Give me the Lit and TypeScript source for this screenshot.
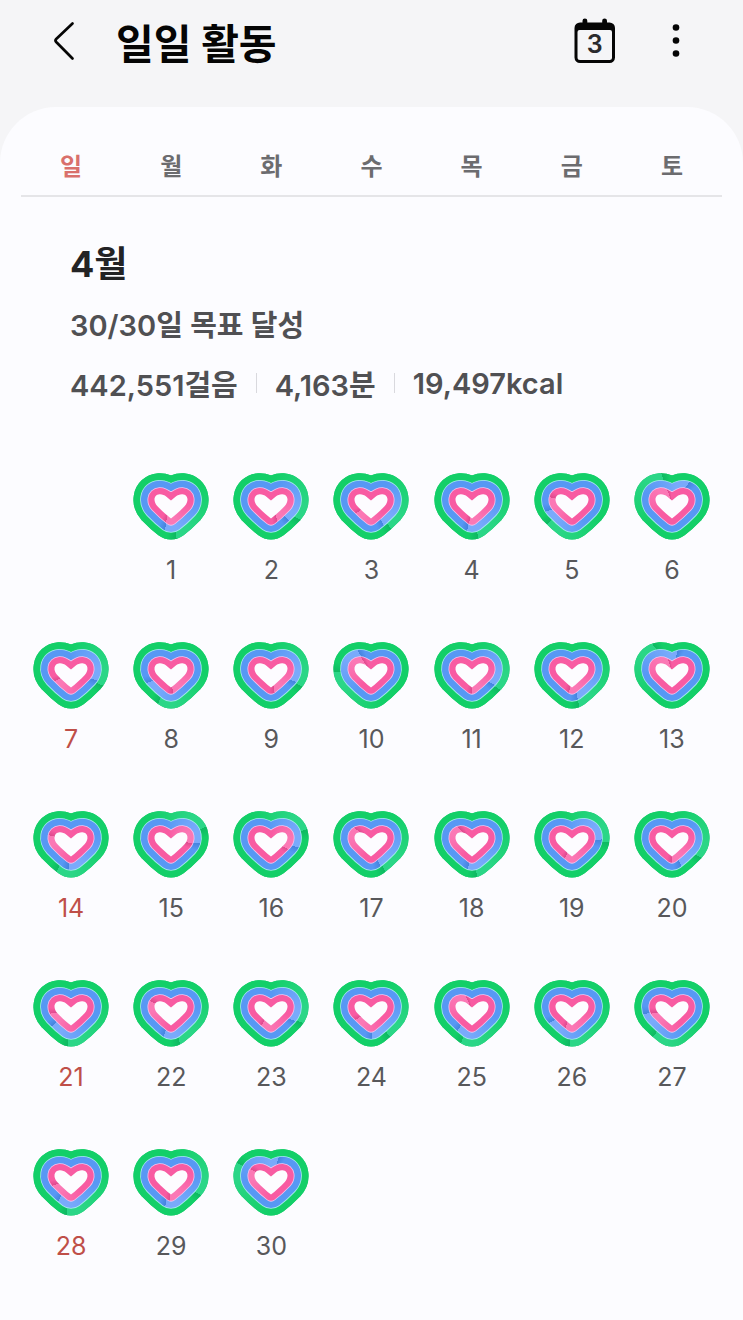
import { LitElement, html, svg, css } from "lit";
import { customElement, property } from "lit/decorators.js";

const HEART =
  "M38 55.5 C34 52.5 28.5 47.5 24.2 43 C20 38.4 20.6 31.6 26.6 31.2 C32 31 34.5 35 38 37.4 C41.5 35 44 31 49.4 31.2 C55.4 31.6 56 38.4 51.8 43 C47.5 47.5 42 52.5 38 55.5 Z";

interface Ring {
  id: string;
  width: number;
  edge: string;
  base: string;
  light: string;
  dark: string;
}

// Outermost ring first; each one is covered by the next.
const RINGS: Ring[] = [
  { id: "steps", width: 42, edge: "#13cf68", base: "#13cf68", light: "#2bd687", dark: "#0eb862" },
  { id: "time", width: 27, edge: "#a6e9ee", base: "#5798f4", light: "#79aafb", dark: "#4584de" },
  { id: "energy", width: 12.4, edge: "#f2c4ee", base: "#f85ba2", light: "#fb78b5", dark: "#de4a8e" },
];

// Where each lap ends, clockwise degrees from the top: steps, time, energy.
const DAYS: number[][] = [
  [171, 193, 195], [120, 135, 160], [142, 150, 235], [170, 190, 188], [230, 252, 285], [340, 40, 340],
  [113, 108, 240], [202, 245, 175], [115, 112, 170], [270, 328, 325], [122, 120, 181], [168, 168, 188], [325, 15, 343],
  [205, 185, 285], [68, 95, 95], [72, 103, 115], [155, 160, 308], [172, 188, 315], [91, 87, 202], [120, 160, 180],
  [185, 230, 260], [165, 195, 293], [112, 115, 212], [145, 177, 237], [198, 215, 335], [184, 240, 200], [215, 262, 260],
  [187, 210, 250], [118, 192, 182], [295, 20, 295],
];

const WEEKDAYS = ["일", "월", "화", "수", "목", "금", "토"];
const FIRST_WEEKDAY = 1;

@customElement("activity-heart")
export class ActivityHeart extends LitElement {
  @property({ attribute: false }) laps: number[] = [0, 0, 0];

  static styles = css`
    :host {
      display: block;
    }
    .heart {
      display: block;
      width: 76px;
      height: 68px;
    }
    .sweep {
      width: 76px;
      height: 80px;
    }
    .edge {
      fill: none;
      stroke-linejoin: round;
    }
    .shape {
      fill: #fff;
      stroke: #fff;
      stroke-linejoin: round;
    }
    .center {
      fill: #fdfcff;
    }
  `;

  private sweep(ring: Ring, angle: number) {
    return `background: conic-gradient(from ${angle}deg at 38px 40px, ${ring.dark}, ${ring.base} 16deg, ${ring.base} 250deg, ${ring.light} 335deg, ${ring.light} 360deg)`;
  }

  render() {
    return html`
      <svg class="heart" viewBox="0 9 76 68" aria-hidden="true">
        ${RINGS.map(
          (ring, i) => svg`
            <mask id=${ring.id} maskUnits="userSpaceOnUse" x="0" y="0" width="76" height="80">
              <path class="shape" d=${HEART} stroke-width=${ring.width}></path>
            </mask>
            <path class="edge" d=${HEART} stroke=${ring.edge} stroke-width=${i === 0 ? ring.width : ring.width + 1.6}></path>
            <g mask="url(#${ring.id})">
              <foreignObject x="0" y="0" width="76" height="80">
                ${html`<div class="sweep" style=${this.sweep(ring, this.laps[i])}></div>`}
              </foreignObject>
            </g>
          `
        )}
        <path class="center" d=${HEART}></path>
      </svg>
    `;
  }
}

@customElement("app-root")
export class AppRoot extends LitElement {
  static styles = css`
    :host {
      display: block;
      min-height: 100vh;
      background: #f5f5f7;
      color: #505053;
      font-family: Inter, "Noto Sans CJK KR", sans-serif;
    }
    button {
      margin: 0;
      padding: 0;
      border: 0;
      background: none;
      color: inherit;
      font: inherit;
      cursor: pointer;
    }
    .page {
      display: flex;
      flex-direction: column;
      min-height: 100vh;
    }
    .bar {
      display: flex;
      align-items: flex-start;
      height: 107px;
      box-sizing: border-box;
      padding: 16px 39px 0 40px;
      color: #050505;
    }
    .icon {
      display: block;
      width: 48px;
      height: 48px;
    }
    .icon svg {
      display: block;
    }
    .title {
      flex: 1;
      margin: 0 0 0 28px;
      font-size: 41px;
      line-height: 56px;
      font-weight: 700;
    }
    .actions {
      display: flex;
      gap: 34px;
    }
    .today {
      font-size: 25px;
      font-weight: 600;
      fill: #2a2a2c;
    }
    .card {
      flex: 1;
      border-radius: 56px 56px 0 0;
      background: #fcfcff;
      padding: 0 21px 48px;
    }
    .week,
    .days {
      display: grid;
      grid-template-columns: repeat(7, 1fr);
      justify-items: center;
    }
    .week {
      padding: 42px 0 10px;
      border-bottom: 2px solid #e5e5e8;
      font-size: 24px;
      line-height: 36px;
      font-weight: 700;
      color: #6c6c6f;
    }
    .week .sunday {
      color: #d9706c;
    }
    .summary {
      padding: 41px 0 0 49px;
    }
    .month {
      margin: 0;
      font-size: 36px;
      line-height: 52px;
      font-weight: 700;
      color: #232325;
    }
    .goal {
      margin: 14px 0 0;
      font-size: 29px;
      line-height: 44px;
      font-weight: 600;
    }
    .totals {
      display: flex;
      align-items: center;
      margin-top: 14px;
      font-size: 29px;
      font-weight: 600;
    }
    .totals .rule {
      width: 1px;
      height: 20px;
      margin: 0 18px;
      background: #d9d9de;
    }
    .days {
      row-gap: 59px;
      padding-top: 68px;
    }
    .day {
      display: flex;
      flex-direction: column;
      align-items: center;
      gap: 18px;
      font-size: 25px;
      line-height: 24px;
      color: #58585b;
    }
    .day.first {
      grid-column-start: ${FIRST_WEEKDAY + 1};
    }
    .day.sunday {
      color: #bf4f48;
    }
  `;

  render() {
    return html`
      <div class="page">
        <header class="bar">
          <button class="icon" aria-label="뒤로">
            <svg width="48" height="48" viewBox="0 0 48 48" fill="none" stroke="currentColor" stroke-width="2.7" stroke-linecap="round" stroke-linejoin="round">
              <path d="M32.5 7.5 L16.2 23 Q14.8 24.5 16.2 26 L32.5 42.5"></path>
            </svg>
          </button>
          <h1 class="title">일일 활동</h1>
          <div class="actions">
            <button class="icon" aria-label="오늘">
              <svg width="48" height="48" viewBox="-1 0 48 48">
                <path fill="currentColor" fill-rule="evenodd" d="M7.5 6.5 V4.8 A2.4 2.4 0 0 1 12.3 4.8 V6.5 H27.2 V4.8 A2.4 2.4 0 0 1 32 4.8 V6.5 H34.5 A5.5 5.5 0 0 1 40 12 V41.5 A5.5 5.5 0 0 1 34.5 47 H5 A5.5 5.5 0 0 1 -.5 41.5 V12 A5.5 5.5 0 0 1 5 6.5 Z M4.5 14 A2 2 0 0 0 2.5 16 V41.5 A2.5 2.5 0 0 0 5 44 H34.5 A2.5 2.5 0 0 0 37 41.5 V16 A2 2 0 0 0 35 14 Z"></path>
                <text class="today" x="19.8" y="37" text-anchor="middle">3</text>
              </svg>
            </button>
            <button class="icon" aria-label="더보기">
              <svg width="48" height="48" viewBox="0 0 48 48" fill="currentColor">
                <circle cx="20" cy="11.5" r="3.3"></circle>
                <circle cx="20" cy="24.5" r="3.3"></circle>
                <circle cx="20" cy="37.5" r="3.3"></circle>
              </svg>
            </button>
          </div>
        </header>
        <main class="card">
          <div class="week">
            ${WEEKDAYS.map((name, i) => html`<span class=${i === 0 ? "sunday" : ""}>${name}</span>`)}
          </div>
          <section class="summary">
            <h2 class="month">4월</h2>
            <p class="goal">30/30일 목표 달성</p>
            <div class="totals">
              <span>442,551걸음</span>
              <span class="rule"></span>
              <span>4,163분</span>
              <span class="rule"></span>
              <span>19,497kcal</span>
            </div>
          </section>
          <div class="days">
            ${DAYS.map((laps, i) => {
              const sunday = (i + FIRST_WEEKDAY) % 7 === 0;
              return html`
                <button class="day ${i === 0 ? "first" : ""} ${sunday ? "sunday" : ""}">
                  <activity-heart .laps=${laps}></activity-heart>
                  <span>${i + 1}</span>
                </button>
              `;
            })}
          </div>
        </main>
      </div>
    `;
  }
}
